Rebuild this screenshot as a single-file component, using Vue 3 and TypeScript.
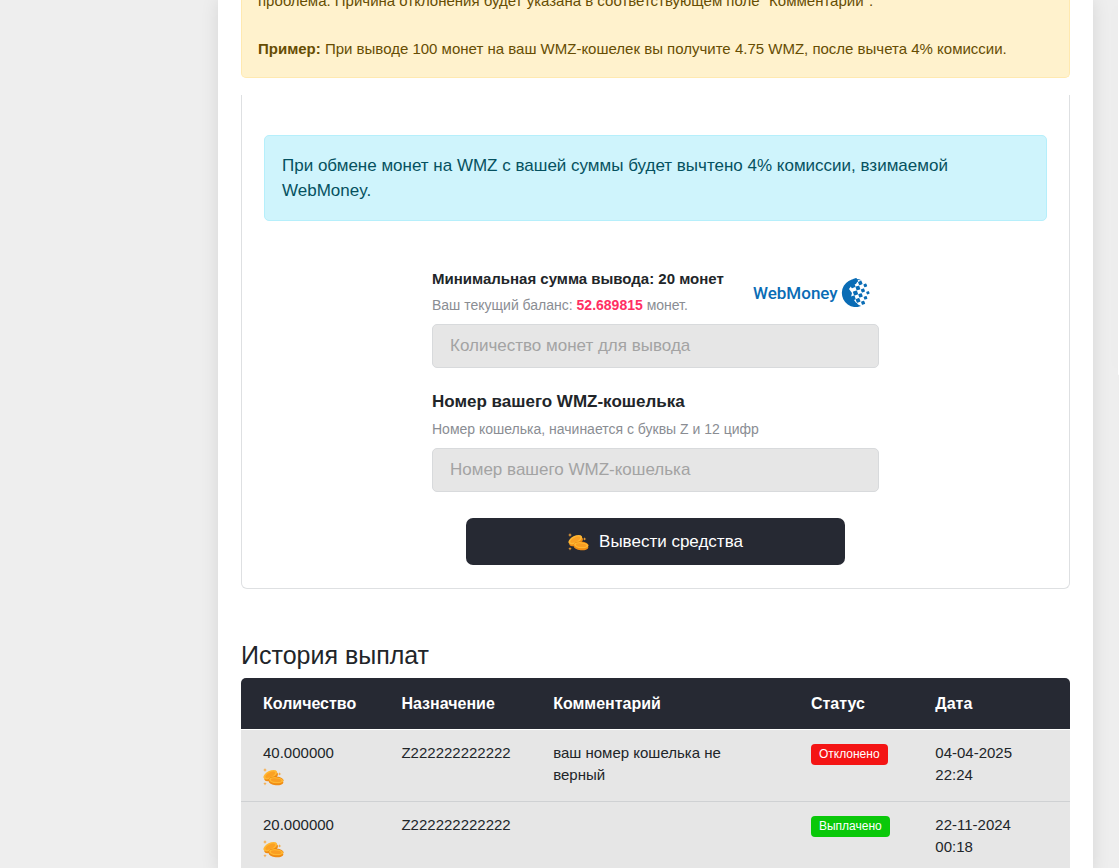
<script setup lang="ts">
import { defineComponent, h, ref } from 'vue'

interface Payout {
  amount: string
  target: string
  comment: string
  status: string
  kind: 'rejected' | 'paid'
  date: string
}

const payouts: Payout[] = [
  { amount: '40.000000', target: 'Z222222222222', comment: 'ваш номер кошелька не верный', status: 'Отклонено', kind: 'rejected', date: '04-04-2025 22:24' },
  { amount: '20.000000', target: 'Z222222222222', comment: '', status: 'Выплачено', kind: 'paid', date: '22-11-2024 00:18' },
]

const coins = ref('')
const wallet = ref('')

const CoinIcon = defineComponent({
  render: () =>
    h('svg', { width: 21, height: 18, viewBox: '0 0 21 18', 'aria-hidden': 'true' }, [
      h('g', { transform: 'rotate(-27 7.6 7)' }, [
        h('ellipse', { cx: 7.4, cy: 8.6, rx: 7.4, ry: 3.8, fill: '#f08c14' }),
        h('ellipse', { cx: 7.4, cy: 6.6, rx: 7.4, ry: 3.8, fill: '#ffb732' }),
        h('ellipse', { cx: 7.4, cy: 6.6, rx: 5.4, ry: 2.2, fill: '#fba124' }),
      ]),
      h('g', { transform: 'rotate(5 13 12)' }, [
        h('ellipse', { cx: 13.2, cy: 13.9, rx: 7.4, ry: 3.4, fill: '#f08c14' }),
        h('ellipse', { cx: 13.2, cy: 11.9, rx: 7.4, ry: 3.4, fill: '#e67f0c' }),
        h('ellipse', { cx: 13.2, cy: 12.2, rx: 7.2, ry: 3.1, fill: '#ffb732' }),
        h('ellipse', { cx: 13.2, cy: 12.2, rx: 5.3, ry: 1.8, fill: '#fa9e22' }),
      ]),
      h('path', {
        fill: '#f7a63a',
        d: 'M2 0l.6 1.4L4 2l-1.4.6L2 4l-.6-1.4L0 2l1.4-.6zM16.6 4.2l.5 1.2 1.2.5-1.2.5-.5 1.2-.5-1.2-1.2-.5 1.2-.5zM2 14l.5 1.2 1.2.5-1.2.5-.5 1.2-.5-1.2-1.2-.5 1.2-.5z',
      }),
    ]),
})

// Tilted lattice of squares on the right side of the globe, shrinking toward its edge.
const globeDots = (() => {
  const dots: { x: number; y: number; s: number }[] = []
  for (let i = -1; i <= 4; i++) {
    for (let j = -3; j <= 3; j++) {
      const x = 104.5 + i * 5 + j * -2.4
      const y = 16 + i * 2.4 + j * 5
      const r = Math.hypot(x - 105, y - 16)
      if (x > 101 && r < 13.6) dots.push({ x, y, s: 4.3 - Math.max(0, x - 104) * 0.11 })
    }
  }
  return dots
})()
</script>

<template>
  <div class="page">
    <div class="left-space"></div>
    <main class="content">
      <section class="notice">
        <p>проблема. Причина отклонения будет указана в соответствующем поле "Комментарий".</p>
        <p><strong>Пример:</strong> При выводе 100 монет на ваш WMZ-кошелек вы получите 4.75 WMZ, после вычета 4% комиссии.</p>
      </section>

      <section class="panel">
        <p class="info">При обмене монет на WMZ с вашей суммы будет вычтено 4% комиссии, взимаемой WebMoney.</p>
        <form class="form" @submit.prevent>
          <div class="head">
            <div class="head-text">
              <label class="label small" for="coins">Минимальная сумма вывода: 20 монет</label>
              <p class="hint">Ваш текущий баланс: <b>52.689815</b> монет.</p>
            </div>
            <svg class="logo" width="121" height="30" viewBox="0 0 121 30" role="img" aria-label="WebMoney">
              <text x="2" y="22" class="logo-text">WebMoney</text>
              <path fill="#0a6cb5" d="M111 3.4A14 14 0 1 0 110 29L106 27L103 23L100 20L101 16L98 12L101 8L105 7L107 3z" />
              <g fill="#0a6cb5">
                <rect
                  v-for="(d, n) in globeDots"
                  :key="n"
                  :x="d.x - d.s / 2"
                  :y="d.y - d.s / 2"
                  :width="d.s"
                  :height="d.s"
                  rx="0.6"
                  :transform="`rotate(-20 ${d.x} ${d.y})`"
                />
              </g>
            </svg>
          </div>
          <input id="coins" v-model="coins" type="text" placeholder="Количество монет для вывода" />
          <label class="label second" for="wallet">Номер вашего WMZ-кошелька</label>
          <p class="hint wallet-hint">Номер кошелька, начинается с буквы Z и 12 цифр</p>
          <input id="wallet" v-model="wallet" type="text" placeholder="Номер вашего WMZ-кошелька" />
          <button type="submit"><CoinIcon />Вывести средства</button>
        </form>
      </section>

      <h2>История выплат</h2>
      <table>
        <colgroup>
          <col class="c-amount" /><col class="c-target" /><col class="c-comment" /><col class="c-status" /><col />
        </colgroup>
        <thead>
          <tr>
            <th>Количество</th>
            <th>Назначение</th>
            <th>Комментарий</th>
            <th>Статус</th>
            <th>Дата</th>
          </tr>
        </thead>
        <tbody>
          <tr v-for="p in payouts" :key="p.date">
            <td><span class="amount">{{ p.amount }}<CoinIcon /></span></td>
            <td>{{ p.target }}</td>
            <td>{{ p.comment }}</td>
            <td><span class="badge" :class="p.kind">{{ p.status }}</span></td>
            <td>{{ p.date }}</td>
          </tr>
        </tbody>
      </table>
    </main>
    <aside class="side"></aside>
  </div>
</template>

<style>
body {
  background: #eee;
  overflow: hidden;
}
</style>

<style scoped>
.page {
  display: grid;
  grid-template-columns: 218px minmax(0, 1fr) 1px;
  height: 100vh;
  overflow: hidden;
  background: #eee;
  color: #212529;
  font-family: "Liberation Sans", Arial, sans-serif;
}
p,
h2 {
  margin: 0;
}
.content {
  margin-right: 25px;
  padding: 0 23px;
  background: #fff;
  box-shadow: 0 0 17px rgba(0, 0, 0, 0.1);
}
.side {
  height: 375px;
  background: #fff;
  border-radius: 0 0 0 6px;
  box-shadow: 0 0 17px rgba(0, 0, 0, 0.1);
}
.notice {
  display: flex;
  flex-direction: column;
  gap: 24px;
  padding: 0 16px 16px;
  border: 1px solid #ffe9b0;
  border-top: 0;
  border-radius: 0 0 5px 5px;
  background: #fff2cd;
  color: #664d03;
  font-size: 15px;
  line-height: 24px;
}
.notice p:first-child {
  margin-top: -11px;
}
.panel {
  margin-top: 17px;
  padding: 40px 22px 23px;
  border: 1px solid #dee0e2;
  border-top: 0;
  border-radius: 0 0 6px 6px;
}
.info {
  padding: 17px;
  border: 1px solid #b6effb;
  border-radius: 5px;
  background: #cff4fc;
  color: #055160;
  font-size: 17px;
  line-height: 25px;
}
.form {
  display: flex;
  flex-direction: column;
  max-width: 447px;
  margin: 45px auto 0;
}
.head {
  display: flex;
  justify-content: space-between;
  align-items: center;
  padding: 0 7px 6px 0;
}
.head-text {
  display: flex;
  flex-direction: column;
}
.label {
  color: #212529;
  font-size: 17px;
  font-weight: 700;
  line-height: 26px;
}
.label.small {
  font-size: 15px;
}
.label.second {
  margin-top: 21px;
}
.hint {
  color: #8a8d93;
  font-size: 14px;
  line-height: 26px;
}
.hint b {
  color: #ff2e63;
}
.wallet-hint {
  line-height: 28px;
  margin-bottom: 5px;
}
.logo-text {
  fill: #0a6cb5;
  font: 500 17px Roboto, "Open Sans", sans-serif;
}
input {
  box-sizing: border-box;
  width: 100%;
  height: 44px;
  padding: 0 17px;
  border: 1px solid #d8dadc;
  border-radius: 5px;
  background: #e6e6e6;
  color: #212529;
  font-family: inherit;
  font-size: 17px;
}
input::placeholder {
  color: #a3a3a3;
  opacity: 1;
}
button {
  display: flex;
  justify-content: center;
  align-items: center;
  gap: 10px;
  width: 85%;
  height: 47px;
  margin: 26px auto 0;
  border: 0;
  border-radius: 7px;
  background: #262933;
  color: #fff;
  font-family: inherit;
  font-size: 17px;
}
h2 {
  margin: 49px 0 6px;
  font-size: 25px;
  font-weight: 400;
  line-height: 34px;
}
table {
  width: 100%;
  table-layout: fixed;
  border-spacing: 0;
  font-size: 15px;
  line-height: 22px;
}
.c-amount { width: 16.7%; }
.c-target { width: 18.3%; }
.c-comment { width: 31.1%; }
.c-status { width: 15%; }
th {
  padding: 15px 22px 14px;
  border-bottom: 1px solid #fff;
  background: #262933;
  color: #fff;
  font-size: 16px;
  text-align: left;
}
th:first-child {
  border-top-left-radius: 5px;
}
th:last-child {
  border-top-right-radius: 5px;
}
td {
  padding: 12px 22px 15px;
  border-bottom: 1px solid #cfd1d3;
  background: #e6e6e6;
  vertical-align: top;
}
.amount {
  display: flex;
  flex-direction: column;
  gap: 4px;
}
.badge {
  display: block;
  width: fit-content;
  margin-top: 2px;
  padding: 0 8px;
  border-radius: 4px;
  color: #fff;
  font-size: 12px;
  line-height: 21px;
}
.rejected { background: #f41414; }
.paid { background: #0ac80a; }
</style>
